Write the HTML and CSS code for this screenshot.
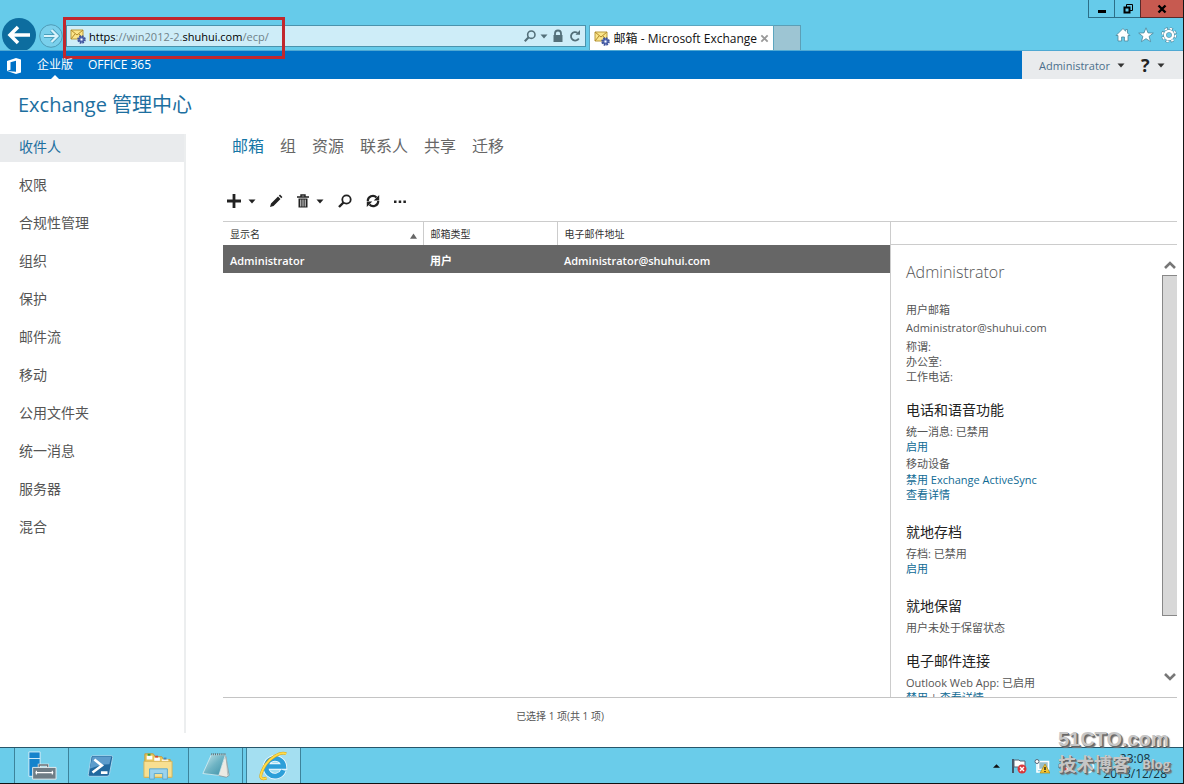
FILE: index.html
```html
<!DOCTYPE html>
<html lang="zh-CN">
<head>
<meta charset="utf-8">
<title>邮箱 - Microsoft Exchange</title>
<link rel="stylesheet" href="styles.css">
</head>
<body>
<svg class="defs" aria-hidden="true">
  <linearGradient id="glass" x1="0" y1="0" x2="1" y2="1"><stop offset="0" stop-color="#c9e9ee"/><stop offset=".5" stop-color="#6fb4c4"/><stop offset="1" stop-color="#3a8ea6"/></linearGradient>
  <symbol id="mail" viewBox="0 0 16 16">
    <path d="M1 2h12v9H1z" fill="#fbe58a" stroke="#b99a3c"/>
    <path d="M1 2l6 5 6-5M1 11l4-5M13 11L9 6" fill="none" stroke="#b28a2a"/>
    <circle cx="11.500" cy="11.500" r="3" fill="#8fa3d8" stroke="#3f549c" stroke-width="2.600" stroke-dasharray="1.500 .85"/>
    <circle cx="11.500" cy="11.500" r="2.500" fill="#6b80c4" stroke="#3f549c"/>
    <circle cx="11.500" cy="11.500" r="1" fill="#fff"/>
  </symbol>
  <symbol id="lens" viewBox="0 0 16 16">
    <circle cx="9.500" cy="6.500" r="4.200" fill="none" stroke="currentColor" stroke-width="1.800"/>
    <path d="M6.500 9.500L2 14" stroke="currentColor" stroke-width="2.400"/>
  </symbol>
  <symbol id="caret" viewBox="0 0 8 5"><path d="M0.500 .5h7L4 4.500z" fill="currentColor"/></symbol>
</svg>

<header class="chrome">
  <div class="window-controls">
    <button aria-label="最小化"><svg viewBox="0 0 12 12"><path d="M2 7h8v3H2z"/></svg></button>
    <button aria-label="还原"><svg viewBox="0 0 12 12"><path d="M4.500 4V1.500h6v6H8" fill="none" stroke="#000"/><path d="M2.500 4.500h5v5h-5z" fill="none" stroke="#000" stroke-width="2"/></svg></button>
    <button class="close" aria-label="关闭"><svg viewBox="0 0 12 12"><path d="M2.500 2.500l7 7M9.500 2.500l-7 7" stroke="#000" stroke-width="2.400"/></svg></button>
  </div>
  <div class="nav-row">
    <button class="back" aria-label="后退"><svg viewBox="0 0 34 34"><circle cx="17" cy="17" r="17" fill="#0d6d9f"/><path d="M28 17H9M16 9l-8 8 8 8" fill="none" stroke="#fff" stroke-width="3.500"/></svg></button>
    <button class="forward" aria-label="前进"><svg viewBox="0 0 24 24"><circle cx="12" cy="12" r="11.300" fill="#7ad0ec" stroke="#4e9bb6"/><path d="M5 12h13M12.500 6l6 6-6 6" fill="none" stroke="#4a9fbc" stroke-width="4"/><path d="M5 12h13M12.500 6l6 6-6 6" fill="none" stroke="#d9f3fb" stroke-width="2.200"/></svg></button>
    <div class="address">
      <svg class="icon16"><use href="#mail"/></svg>
      <p class="url"><b>https</b>://win2012-2.<b>shuhui.com</b>/ecp/</p>
      <button aria-label="搜索"><svg class="icon14"><use href="#lens"/></svg></button>
      <button aria-label="历史记录"><svg class="caret"><use href="#caret"/></svg></button>
      <svg class="icon14" viewBox="0 0 14 14"><path d="M4 6V4.500a3 3 0 0 1 6 0V6" fill="none" stroke="#54707a" stroke-width="1.800"/><path d="M2.500 6h9v7h-9z" fill="#54707a"/></svg>
      <button aria-label="刷新"><svg class="icon14" viewBox="0 0 14 14"><path d="M10.800 9.500A4.200 4.200 0 1 1 9.500 3.800" fill="none" stroke="currentColor" stroke-width="1.800"/><path d="M7.500 5.800h4.500V1z" fill="currentColor"/></svg></button>
      <span class="highlight"></span>
    </div>
    <div class="tab">
      <svg class="icon16"><use href="#mail"/></svg>
      <span>邮箱 - Microsoft Exchange</span>
      <button aria-label="关闭标签页"><svg viewBox="0 0 10 10"><path d="M1.500 1.500l7 7M8.500 1.500l-7 7" stroke="#999" stroke-width="2"/></svg></button>
    </div>
    <button class="new-tab" aria-label="新建标签页"></button>
    <div class="tools">
      <button aria-label="主页"><svg viewBox="0 0 16 16"><path d="M8 1.500L1 8.500h2V14h3.600v-4h2.800v4H13V8.500h2L12.500 6V2.500h-1.800v1.800z" fill="#fff" stroke="#49859b" stroke-width=".8"/></svg></button>
      <button aria-label="收藏夹"><svg viewBox="0 0 16 16"><path d="M8 .8l2 5.100 5.300.2-4.200 3.300 1.500 5.300L8 11.700l-4.600 3 1.500-5.300L.7 6.100 6 5.900z" fill="#fff" stroke="#49859b" stroke-width=".8"/></svg></button>
      <button aria-label="工具"><svg viewBox="0 0 16 16"><circle cx="8" cy="8" r="6" fill="none" stroke="#49859b" stroke-width="3.600" stroke-dasharray="2.900 1.810"/><circle cx="8" cy="8" r="6" fill="none" stroke="#fff" stroke-width="2.600" stroke-dasharray="2.300 2.410"/><circle cx="8" cy="8" r="4" fill="none" stroke="#49859b" stroke-width="3.400"/><circle cx="8" cy="8" r="4" fill="none" stroke="#fff" stroke-width="2.400"/></svg></button>
    </div>
  </div>
</header>

<nav class="suite-bar">
  <svg class="office" viewBox="0 0 16 18"><path d="M1 4l9-3 5 1.500v13L10 17 1 14l9 .8V3.800L4.500 5.200v7.500L1 14z" fill="#fff"/></svg>
  <a class="current" href="#">企业版</a>
  <a href="#">OFFICE 365</a>
  <div class="account">
    <button>Administrator <svg class="caret"><use href="#caret"/></svg></button>
    <button class="help"><b>?</b> <svg class="caret"><use href="#caret"/></svg></button>
  </div>
</nav>

<div class="page">
  <h1>Exchange 管理中心</h1>
  <div class="columns">
    <nav class="sidebar">
      <a class="selected" href="#">收件人</a>
      <a href="#">权限</a>
      <a href="#">合规性管理</a>
      <a href="#">组织</a>
      <a href="#">保护</a>
      <a href="#">邮件流</a>
      <a href="#">移动</a>
      <a href="#">公用文件夹</a>
      <a href="#">统一消息</a>
      <a href="#">服务器</a>
      <a href="#">混合</a>
    </nav>
    <main>
      <nav class="pivots">
        <a class="selected" href="#">邮箱</a><a href="#">组</a><a href="#">资源</a><a href="#">联系人</a><a href="#">共享</a><a href="#">迁移</a>
      </nav>
      <div class="toolbar">
        <button aria-label="新建"><svg class="icon16" viewBox="0 0 16 16"><path d="M8 1v14M1 8h14" stroke="currentColor" stroke-width="2.800"/></svg><svg class="caret"><use href="#caret"/></svg></button>
        <button aria-label="编辑"><svg class="icon14" viewBox="0 0 14 14"><path d="M1 13l1-3.500L9 2.500 11.500 5l-7 7zM9.800 1.700L11 .6 13.400 3l-1.100 1.200z" fill="currentColor"/></svg></button>
        <button aria-label="删除"><svg class="icon14" viewBox="0 0 14 14"><path d="M1 3h12M5 2.500V1h4v1.500" fill="none" stroke="currentColor" stroke-width="1.400"/><path d="M2.500 4.500h9V13.500h-9z" fill="currentColor"/><path d="M4.800 5.500v7M7 5.500v7M9.200 5.500v7" stroke="#fff" stroke-width=".9"/></svg><svg class="caret"><use href="#caret"/></svg></button>
        <button aria-label="搜索"><svg class="icon16"><use href="#lens"/></svg></button>
        <button aria-label="刷新"><svg class="icon14" viewBox="0 0 14 14"><path d="M1.800 7A5 5 0 0 1 10.500 3.500M12.200 7A5 5 0 0 1 3.500 10.500" fill="none" stroke="currentColor" stroke-width="2.200"/><path d="M13.200 1v5.500H7.700zM.8 13V7.500h5.500z" fill="currentColor"/></svg></button>
        <button aria-label="更多"><svg class="icon14" viewBox="0 0 14 14"><path d="M1 6.500h2.500v2.500H1zM5.700 6.500h2.500v2.500H5.700zM10.400 6.500h2.500v2.500h-2.500z" fill="currentColor"/></svg></button>
      </div>
      <div class="split">
        <div class="list">
          <table>
            <colgroup><col class="c-name"><col class="c-type"><col></colgroup>
            <thead><tr><th><span>显示名</span><svg class="sort" viewBox="0 0 8 6"><path d="M4 0l4 6H0z" fill="#666"/></svg></th><th>邮箱类型</th><th>电子邮件地址</th></tr></thead>
            <tbody><tr><td>Administrator</td><td>用户</td><td>Administrator@shuhui.com</td></tr></tbody>
          </table>
        </div>
        <section class="details">
          <div class="details-head"></div>
          <div class="details-body">
            <div class="text">
              <h2>Administrator</h2>
              <p>用户邮箱</p>
              <p class="mail">Administrator@shuhui.com</p>
              <p>称谓:</p>
              <p>办公室:</p>
              <p>工作电话:</p>
              <h3>电话和语音功能</h3>
              <p>统一消息: 已禁用</p>
              <p><a href="#">启用</a></p>
              <p class="device">移动设备</p>
              <p><a href="#">禁用 Exchange ActiveSync</a></p>
              <p><a href="#">查看详情</a></p>
              <h3 class="wide">就地存档</h3>
              <p>存档: 已禁用</p>
              <p><a href="#">启用</a></p>
              <h3 class="wide">就地保留</h3>
              <p>用户未处于保留状态</p>
              <h3>电子邮件连接</h3>
              <p>Outlook Web App: 已启用</p>
              <p><a href="#">禁用</a> | <a href="#">查看详情</a></p>
            </div>
            <div class="scrollbar">
              <button aria-label="向上滚动"><svg viewBox="0 0 12 8"><path d="M1 7l5-5 5 5" fill="none" stroke="#777" stroke-width="2.600"/></svg></button>
              <div class="track"><div class="thumb"></div></div>
              <button aria-label="向下滚动"><svg viewBox="0 0 12 8"><path d="M1 1l5 5 5-5" fill="none" stroke="#777" stroke-width="2.600"/></svg></button>
            </div>
          </div>
        </section>
      </div>
      <p class="status">已选择 1 项(共 1 项)</p>
    </main>
  </div>
</div>

<footer class="taskbar">
  <button class="open" aria-label="服务器管理器"><svg viewBox="0 0 32 32"><path d="M2 1h12v26H2z" fill="#1583cc" stroke="#d9f1fa"/><path d="M2 8h12" stroke="#d9f1fa"/><path d="M13 18v-3h9v3" fill="none" stroke="#eee" stroke-width="3"/><path d="M13 18v-3h9v3" fill="none" stroke="#66727a" stroke-width="1.500"/><path d="M6 17.500h25V30H6z" fill="#6f7d86" stroke="#e8eff2"/><path d="M9 23h19M10 21v4M27 21v4" stroke="#fff" stroke-width="1.200"/></svg></button>
  <button aria-label="PowerShell"><svg viewBox="0 0 32 32"><path d="M8 5h20q2 0 1.500 2L26 25q-.5 2-2.500 2H5q-2 0-1.500-2L6.500 6.500Q6.800 5 8 5z" fill="#22699f" stroke="#a9d8ee"/><path d="M8 6h20l-2 8q-10 0-21 5z" fill="#5c9ccc"/><path d="M10 9l8 6.500L8 23M17 23h7" fill="none" stroke="#fff" stroke-width="2.800"/></svg></button>
  <button aria-label="文件资源管理器"><svg viewBox="0 0 32 32"><path d="M2 6V3h9l2 3h7l2 3h7v19H2z" fill="#eac55a" stroke="#c49b3a"/><path d="M4 5h6v4H4zM12 7h6v4h-6zM20 9h7v4h-7z" fill="#fff"/><path d="M5 3h3v2H5z" fill="#2ca545"/><path d="M13 5h3v2h-3z" fill="#d4463a"/><path d="M22 7h3v2h-3z" fill="#3d87c7"/><path d="M1 11h30v17H1z" fill="#f7df91" stroke="#d6b355"/><path d="M7 30V19h19v11h-5v-6h-9v6z" fill="#9bd3ee" stroke="#5ba7cd"/></svg></button>
  <button class="open" aria-label="记事本"><svg viewBox="0 0 32 32"><path d="M26 4l4 22-3 2-9-2z" fill="#eceae3" stroke="#7f9096" stroke-width=".8"/><path d="M27 6l1.500 20" stroke="#aab2b2" stroke-width=".8"/><path d="M11 4h15l-7 22-17-2z" fill="url(#glass)" stroke="#dceff3" stroke-width=".8"/><path d="M11 3.500h15" stroke="#5d6c70" stroke-width="2" stroke-dasharray="1 1"/></svg></button>
  <button class="open active" aria-label="Internet Explorer"><svg viewBox="0 0 32 32"><path d="M26 20.500A9.500 9.500 0 1 1 26.500 16.500H9" fill="none" stroke="#f3fbff" stroke-width="6.800"/><path d="M26 20.500A9.500 9.500 0 1 1 26.500 16.500H9" fill="none" stroke="#2c9fd9" stroke-width="5"/><path d="M29 3C23 0 10 8 5 18S1 31 8 29" fill="none" stroke="#d9a516" stroke-width="3"/><path d="M29 3C23 0 10 8 5 18S1 31 8 29" fill="none" stroke="#ffdc4b" stroke-width="2"/></svg></button>
  <div class="tray">
    <svg class="tray-up" viewBox="0 0 8 5"><path d="M0 5l4-4 4 4z" fill="#111"/></svg>
    <svg class="icon16" viewBox="0 0 16 16"><path d="M2 1v14" stroke="#456" stroke-width="2"/><path d="M3 2h5l1 1h5v7H8L7 9H3z" fill="#fff" stroke="#567"/><circle cx="11" cy="11" r="4.500" fill="#d8383b"/><path d="M9 9l4 4M13 9l-4 4" stroke="#fff" stroke-width="1.400"/></svg>
    <svg class="icon16" viewBox="0 0 16 16"><path d="M4.500 3.500h10v8h-10z" fill="#9bbfca" stroke="#fff" stroke-width="1.600"/><circle cx="3" cy="3.500" r="2" fill="#fff" stroke="#567"/><path d="M3 6v8h4" fill="none" stroke="#fff" stroke-width="1.600"/><path d="M11 6l5 9H6z" fill="#f4c633" stroke="#a47c0b" stroke-width=".6"/><path d="M11 9v3M11 13v1" stroke="#111" stroke-width="1.300"/></svg>
    <svg class="icon16" viewBox="0 0 16 16"><path d="M2 6h3l5-4v12L5 10H2z" fill="#fff" stroke="#567"/><circle cx="11" cy="11" r="4.500" fill="#d8383b"/><path d="M9 9l4 4M13 9l-4 4" stroke="#fff" stroke-width="1.400"/></svg>
    <svg class="icon16" viewBox="0 0 16 16"><circle cx="8" cy="9" r="5.500" fill="none" stroke="#e4f4fa" stroke-width="1.600"/></svg>
    <p class="clock"><span>23:08</span><span>2013/12/28</span></p>
  </div>
  <div class="watermark"><span class="site">51CTO.com</span><span class="line"><span class="cn">技术博客</span><span class="blog">Blog</span></span></div>
</footer>
</body>
</html>
```

FILE: styles.css
```css
* { box-sizing: border-box; }
body {
  margin: 0;
  height: 100vh;
  display: flex;
  flex-direction: column;
  overflow: hidden;
  border-right: 1px solid #151515;
  background: #fff;
  color: #555;
  font: 11px/15px "Open Sans", "Noto Sans CJK SC", sans-serif;
}
h1, h2, h3, p { margin: 0; font-weight: 400; }
a { text-decoration: none; color: inherit; }
button { border: 0; padding: 0; background: none; color: inherit; font: inherit; display: flex; align-items: center; justify-content: center; }
svg { display: block; flex: none; }
.defs { position: absolute; width: 0; height: 0; }
.icon16 { width: 16px; height: 16px; }
.icon14 { width: 14px; height: 14px; }
.caret { width: 8px; height: 5px; }

.chrome { flex: none; height: 51px; background: #66cbea; border-bottom: 1px solid #4fa9d3; }
.window-controls { height: 18px; display: flex; justify-content: flex-end; }
.window-controls button { width: 26px; border: 1px solid #2c6f88; border-top: 0; border-right: 0; }
.window-controls svg { width: 12px; height: 12px; }
.window-controls .close { width: 43px; background: #c75a50; border-color: #592a2a; }

.nav-row { height: 32px; display: flex; align-items: flex-start; padding-left: 2px; }
.back svg { width: 34px; height: 34px; }
.back { height: 32px; overflow: hidden; align-items: flex-start; }
.forward { margin: 6px 3px 0; }
.forward svg { width: 24px; height: 24px; }
.address {
  position: relative;
  flex: 521;
  height: 22px;
  margin-top: 7px;
  padding: 0 3px;
  display: flex;
  align-items: center;
  gap: 3px;
  border: 1px solid #4a93ad;
  background: #ceedf8;
  color: #54707a;
}
.url { flex: 1; color: #6f8289; font-size: 11px; }
.url b { font-weight: 400; color: #000; }
.highlight { position: absolute; left: -4px; top: -9px; width: 222px; height: 42px; border: 3px solid #c1272d; }
.tab {
  flex: none;
  margin: 7px 0 0 3px;
  width: 185px;
  height: 25px;
  padding: 0 4px;
  display: flex;
  align-items: center;
  justify-content: space-between;
  background: #fff;
  border: 1px solid #5ca6bf;
  border-bottom: 0;
  color: #111;
  font-size: 12px;
  white-space: nowrap;
}
.tab button svg { width: 9px; height: 9px; }
.new-tab { width: 27px; height: 25px; margin-top: 7px; background: #9dc5d3; border: 1px solid #5c9fb6; border-width: 1px 1px 0 0; }
.tools { flex: 382; display: flex; justify-content: flex-end; gap: 7px; padding: 9px 6px 0 0; }
.tools svg { width: 16px; height: 16px; }

.suite-bar { flex: none; height: 28px; display: flex; background: #0072c6; color: #fff; font-size: 12px; line-height: 27px; }
.suite-bar .office { width: 16px; height: 18px; margin: 6px 15px 0 6px; }
.suite-bar .current { position: relative; margin-right: 15px; }
.suite-bar .current::after { content: ""; position: absolute; left: 14px; bottom: 0; border: 4px solid transparent; border-top: 0; border-bottom-color: #fff; }
.account { margin-left: auto; width: 161px; padding-left: 17px; display: flex; gap: 16px; background: #e9ebed; color: #4b6f8b; font-size: 11px; }
.account button { gap: 7px; }
.account .caret { color: #333; }
.account b { font-size: 18px; color: #222; }

.page { flex: 1; min-height: 0; display: flex; flex-direction: column; }
h1 { padding: 11px 18px 14px; font-size: 20px; line-height: 30px; color: #1d6f9f; }
.columns { flex: 1; min-height: 0; display: flex; }
.sidebar { width: 186px; margin-bottom: 14px; border-right: 2px solid #eceeef; display: flex; flex-direction: column; gap: 10px; font-size: 14px; line-height: 28px; }
.sidebar a { padding-left: 19px; height: 28px; line-height: 26px; }
.sidebar .selected { background: #e9ebed; color: #1d6f9f; }
main { flex: 1; min-width: 0; margin-left: 37px; display: flex; flex-direction: column; }
.pivots { display: flex; gap: 16px; padding-left: 9px; font-size: 16px; line-height: 25px; color: #666; }
.pivots .selected { color: #1576a6; }
.toolbar { display: flex; align-items: center; gap: 13px; height: 22px; margin: 31px 0 9px; padding-left: 3px; color: #222; }
.toolbar button { gap: 6px; }
.split { flex: 1; min-height: 0; margin-right: 6px; display: flex; border-top: 1px solid #ccc; border-bottom: 1px solid #c4c4c4; }
.list { flex: 1; min-width: 0; }
table { width: 100%; table-layout: fixed; border-collapse: collapse; text-align: left; }
.c-name { width: 200px; }
.c-type { width: 134px; }
th { height: 23px; padding: 0 8px 0 7px; font-size: 10px; line-height: 14px; font-weight: 400; color: #333; border-right: 1px solid #ccc; }
th:last-child { border-right: 0; }
th:first-child svg { float: right; width: 7px; height: 6px; margin: 6px -2px 0 0; }
td { height: 28px; padding: 2px 7px 0; background: #666; color: #fff; font-weight: 600; }
.details { flex: none; width: 287px; display: flex; flex-direction: column; border-left: 1px solid #ccc; }
.details-head { flex: none; height: 23px; border-bottom: 1px solid #ccc; }
.details-body { flex: 1; min-height: 0; display: flex; overflow: hidden; }
.text { flex: 1; padding: 16px 0 0 15px; }
.text a { color: #0f6a94; }
h2 { margin-bottom: 19px; font-size: 16px; line-height: 22px; color: #555; font-weight: 300; }
h3 { margin: 16px 0 4px; font-size: 14px; line-height: 20px; color: #222; }
h3.wide { margin-top: 20px; }
.mail { margin: 3px 0 4px; }
.device { margin: 2px 0 1px; }
.scrollbar { width: 15px; display: flex; flex-direction: column; padding: 15px 0; }
.scrollbar button { height: 10px; }
.scrollbar button svg { width: 12px; height: 8px; }
.track { flex: 1; padding: 5px 0; }
.thumb { height: 87%; background: #d8d8d8; border: 1px solid #888; border-right: 0; }
.status { height: 49px; padding-top: 11px; margin-right: 286px; text-align: center; font-size: 10px; }

.taskbar { position: relative; flex: none; height: 37px; display: flex; gap: 3px; padding-left: 14px; background: #6accea; border-top: 1px solid #28566a; border-bottom: 1px solid #111; }
.taskbar button { width: 55px; border: solid transparent; border-width: 0 1px; }
.taskbar button svg { width: 30px; height: 30px; }
.taskbar .open { border-color: #3d839b; background: #75d0eb; }
.taskbar .active { background: #a4dff1; }
.tray { margin-left: auto; display: flex; align-items: center; gap: 7px; padding-right: 16px; color: #16323d; }
.tray-up { width: 7px; height: 5px; margin-right: 4px; }
.clock { display: flex; flex-direction: column; align-items: center; font-size: 12px; }
.watermark { position: absolute; right: 13px; bottom: 7px; display: flex; flex-direction: column; color: #c6c6c6; font-weight: 700; text-shadow: 1px 1px 0 #666, 2px 2px 1px #777; white-space: nowrap; }
.site { font: 700 20px/26px "Liberation Sans", sans-serif; }
.line { display: flex; align-items: center; }
.cn { font-size: 18px; line-height: 24px; }
.blog { font-size: 13px; margin-left: 12px; }
```
